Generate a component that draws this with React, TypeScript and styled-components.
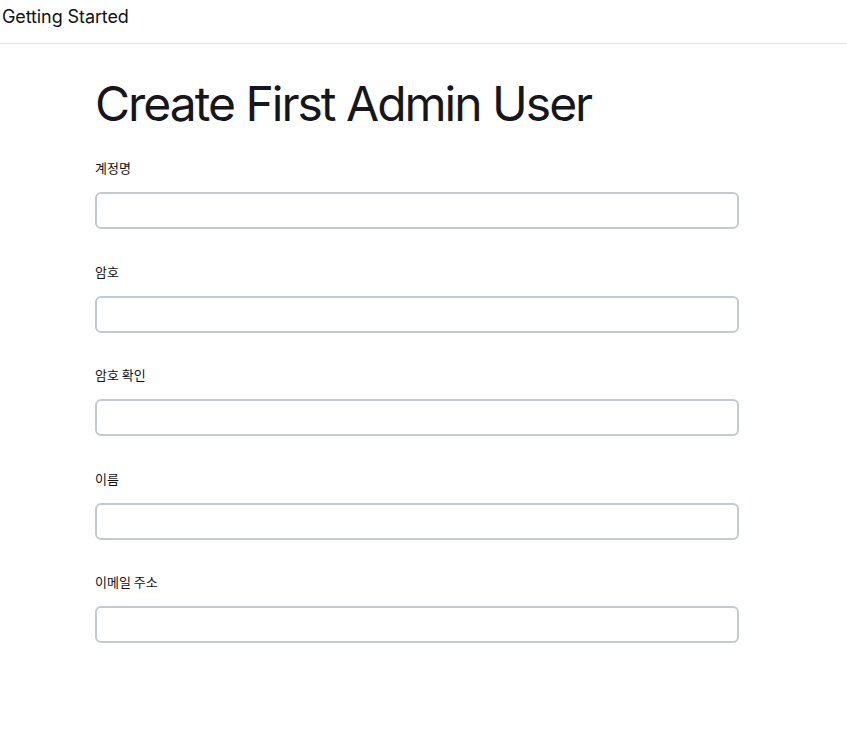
import styled, { createGlobalStyle } from "styled-components";

const GlobalStyle = createGlobalStyle`
  body {
    margin: 0;
    background: #ffffff;
    color: #16161d;
    font-family: Inter, "Noto Sans CJK KR", sans-serif;
  }
`;

const TopBar = styled.header`
  height: 44px;
  box-sizing: border-box;
  padding: 6px 0 0 2px;
  border-bottom: 1px solid #e2e2e2;
  font-size: 18px;
  line-height: 22px;
  letter-spacing: -0.1px;
  color: #111;
`;

const Main = styled.main`
  width: 644px;
  margin-left: 95px;
  padding-top: 29px;
`;

const Title = styled.h1`
  margin: 0 0 24px;
  font-size: 48px;
  font-weight: 400;
  line-height: 62px;
  letter-spacing: -2px;
  color: #16161d;
`;

const Form = styled.form`
  display: flex;
  flex-direction: column;
  gap: 33.5px;
`;

const Field = styled.div`
  display: flex;
  flex-direction: column;
  gap: 15px;
`;

const Label = styled.label`
  font-size: 13px;
  line-height: 18px;
  color: #111;
  font-family: "Noto Sans CJK KR", Inter, sans-serif;
`;

const Input = styled.input`
  box-sizing: border-box;
  width: 100%;
  height: 37px;
  border: 2px solid #c2cad2;
  border-radius: 6px;
  background: #fff;
  outline: none;
  font-size: 14px;
  padding: 0 10px;
`;

const fields = [
  { id: "username", label: "계정명", type: "text" },
  { id: "password", label: "암호", type: "password" },
  { id: "password2", label: "암호 확인", type: "password" },
  { id: "fullname", label: "이름", type: "text" },
  { id: "email", label: "이메일 주소", type: "email" },
];

const App: React.FC = () => {
  return (
    <>
      <GlobalStyle />
      <TopBar>Getting Started</TopBar>
      <Main>
        <Title>Create First Admin User</Title>
        <Form>
          {fields.map((f) => (
            <Field key={f.id}>
              <Label htmlFor={f.id}>{f.label}</Label>
              <Input id={f.id} name={f.id} type={f.type} />
            </Field>
          ))}
        </Form>
      </Main>
    </>
  );
};

export default App;
